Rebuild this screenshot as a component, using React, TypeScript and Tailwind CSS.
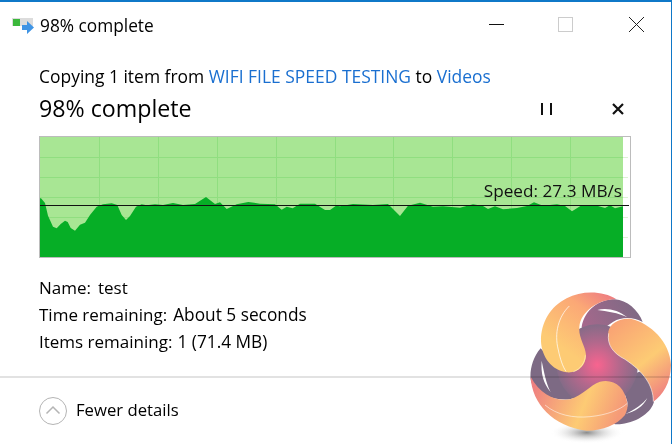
const chartTop = "M41 199.3L45 204L48 216.7L53 227.7L56.7 229.3L60.7 225L65 221.7L67.7 223L70.7 229L75 231.7L80 225.7L85 223.7L90 216L96.7 207.7L103 205.3L111.7 204.3L117.3 206L121.7 216L126 221L130 217L136 207.7L141.7 205.3L146.7 206.3L155 205.3L163 206L173 204L183 206L195 205L206 198L215 205L220 203.3L226.7 210L236.7 205.3L248.3 203L260 204.7L275 205.3L281.7 210.7L286.7 207.7L292.7 209.3L300 204.7L315 204.7L325 211L330 211L336 206.7L340 207.3L353 205L373 206L388 205L400 217L408 206.7L420 203.7L433 207.7L443 207.3L460 208.7L473 205.3L483 207L488 210L495 207.3L503 210.3L517 209L527 207L534 203.3L543 206.7L557 205.3L565 207L572 212.3L582 206L598 207L605 209L610 206.3L615 209.3L623 207.3";

const gridX = [99.5, 158.5, 217.5, 276.5, 335.5, 393.5, 452.5, 511.5, 570.5];
const gridY = [158.5, 178.5, 198.5, 218.5, 238.5];

function SpeedChart() {
  return (
    <div className="relative h-[122px] w-[592px]">
      <svg viewBox="39 137 592 122" className="block h-[122px] w-[592px]">
        <rect x="39.5" y="137.5" width="591" height="121" fill="#fff" stroke="#bcbcbc" />
        <rect x="40" y="138" width="583" height="120" fill="#a8e694" />
        {gridX.map((x) => (
          <line key={x} x1={x} x2={x} y1="138" y2="258" stroke="#90de80" />
        ))}
        {gridY.map((y) => (
          <g key={y}>
            <line x1="40" x2="623" y1={y} y2={y} stroke="#90de80" />
            <line x1="623" x2="628" y1={y} y2={y} stroke="#dcf3d4" />
          </g>
        ))}
        <path d={`${chartTop}L623 258L40 258L40 199.3Z`} fill="#06ae26" />
        <line x1="40" x2="629" y1="206.5" y2="206.5" stroke="#111" />
      </svg>
      <span className="absolute right-[9px] top-[43px] whitespace-nowrap text-[17.2px] leading-[24px] text-[#111]">Speed: 27.3 MB/s</span>
    </div>
  );
}

function Logo() {
  return (
    <svg viewBox="0 0 486 522" className="absolute left-[510px] top-[268px] h-[174px] w-[162px] mix-blend-multiply">
      <defs>
        <radialGradient id="core" cx="262" cy="285" r="135" gradientUnits="userSpaceOnUse">
          <stop offset="0" stopColor="#f8648f" />
          <stop offset="0.5" stopColor="#b3688c" />
          <stop offset="1" stopColor="#7a6c86" />
        </radialGradient>
        <linearGradient id="band" x1="230" y1="180" x2="380" y2="100" gradientUnits="userSpaceOnUse">
          <stop offset="0" stopColor="#a5688c" />
          <stop offset="1" stopColor="#7d6a84" />
        </linearGradient>
        <linearGradient id="petalA" x1="270" y1="60" x2="150" y2="230" gradientUnits="userSpaceOnUse">
          <stop offset="0" stopColor="#ef8080" />
          <stop offset="0.35" stopColor="#fba876" />
          <stop offset="1" stopColor="#fdcb74" />
        </linearGradient>
        <linearGradient id="petalB" x1="470" y1="370" x2="310" y2="170" gradientUnits="userSpaceOnUse">
          <stop offset="0" stopColor="#ef8080" />
          <stop offset="0.45" stopColor="#fdcb74" />
          <stop offset="1" stopColor="#f9a474" />
        </linearGradient>
        <linearGradient id="petalC" x1="70" y1="350" x2="320" y2="450" gradientUnits="userSpaceOnUse">
          <stop offset="0" stopColor="#ef8080" />
          <stop offset="0.6" stopColor="#fdcb74" />
          <stop offset="1" stopColor="#f59a78" />
        </linearGradient>
        <radialGradient id="drop" cx="230" cy="488" r="110" gradientTransform="translate(0 341.6) scale(1 .3)" gradientUnits="userSpaceOnUse">
          <stop offset="0" stopColor="#8b8b8b" />
          <stop offset="1" stopColor="#fff" stopOpacity="0" />
        </radialGradient>
      </defs>
      <ellipse cx="230" cy="488" rx="115" ry="32" fill="url(#drop)" />

      {/* dark bands behind the petals */}
      <path d="M215 170C225 120 265 88 315 88C350 90 385 120 398 156C370 140 335 140 310 155C285 170 270 190 225 195Z" fill="url(#band)" />
      <path d="M92 235C60 270 55 330 68 345C90 375 130 392 180 388C210 380 230 360 245 345L150 300Z" fill="#7d6a84" />
      <path d="M400 300C425 320 435 360 432 395C425 425 385 455 335 462C322 464 315 462 310 462C340 440 355 420 352 395L330 330Z" fill="#7d6a84" />
      <circle cx="262" cy="285" r="122" fill="url(#core)" />
      <path d="M262 120C290 112 325 120 352 142C325 128 290 124 262 120Z" fill="#fff" />
      <path d="M95 272C92 310 100 340 122 366C108 340 102 305 95 272Z" fill="#fff" />
      <path d="M345 432C375 425 400 410 412 384C400 400 375 420 345 432Z" fill="#fff" />

      {/* top-left petal */}
      <path
        d="M318 87C280 62 215 60 170 85C120 110 92 160 93 215C96 262 125 300 170 307C205 310 228 285 228 255C226 225 205 205 208 170C212 125 265 88 318 87Z"
        fill="url(#petalA)"
      />
      <path d="M178 108C145 140 132 190 145 240C150 265 158 290 168 304" fill="none" stroke="#fff" strokeWidth="2.500" opacity=".85" />
      <path d="M190 305C212 298 226 276 226 256" fill="none" stroke="#fff3c4" strokeWidth="2" />

      {/* right petal */}
      <path
        d="M295 185C300 160 330 142 365 147C420 160 480 215 483 285C482 340 458 375 430 395C430 345 400 305 345 268C310 250 290 225 295 185Z"
        fill="url(#petalB)"
      />
      <path d="M296 190C290 225 310 250 345 268C400 305 430 345 430 395" fill="none" stroke="#fff" strokeWidth="2" opacity=".85" />

      {/* bottom petal */}
      <path
        d="M352 400C345 350 310 325 270 335C240 345 220 375 180 388C140 395 90 375 62 320C65 400 130 470 230 482C280 482 320 465 345 435C352 420 354 410 352 400Z"
        fill="url(#petalC)"
      />
      <path d="M105 405C140 435 190 445 240 440C290 435 330 420 352 400" fill="none" stroke="#fff" strokeWidth="2" opacity=".8" />
    </svg>
  );
}

function CopyIcon() {
  return (
    <svg viewBox="0 0 23 17" className="h-[17px] w-[23px]">
      <rect x="0" y="1" width="21" height="8" fill="#dcdcdc" />
      <rect x="1" y="2" width="7" height="7" fill="#3cb83c" />
      <path d="M10 8h5V4l7 6.500-7 6.500v-4h-5z" fill="#3f94e4" />
    </svg>
  );
}

export default function App() {
  return (
    <div className="relative flex h-[444px] w-[672px] flex-col overflow-hidden border-t-2 border-r border-[#0f78c8] bg-white font-['Open_Sans','Noto_Sans',sans-serif] text-black">
      <div className="flex h-[44px] shrink-0 items-center">
        <div className="ml-3 mt-[3px] flex items-center gap-[5px]">
          <CopyIcon />
          <span className="whitespace-nowrap text-[17.3px] leading-none">98% complete</span>
        </div>
        <div className="ml-auto flex items-center">
          <svg viewBox="0 0 15 15" className="mr-[54px] h-[15px] w-[15px]">
            <path d="M0 7.500h15" stroke="#111" />
          </svg>
          <svg viewBox="0 0 15 15" className="mr-[56px] h-[15px] w-[15px]">
            <rect x=".5" y=".5" width="14" height="14" fill="none" stroke="#ccc" />
          </svg>
          <svg viewBox="0 0 15 15" className="mr-[27px] h-[15px] w-[15px]">
            <path d="M0 0l15 15M15 0L0 15" stroke="#222" strokeWidth="1" />
          </svg>
        </div>
      </div>

      <div className="flex flex-col pl-[39px] pt-[19px]">
        <p className="h-[22px] whitespace-nowrap text-[17.45px] leading-[22px]">
          Copying 1 item from <span className="text-[#1a6fd0]">WIFI FILE SPEED TESTING</span> to{" "}
          <span className="text-[#1a6fd0]">Videos</span>
        </p>
        <div className="mt-[4px] flex h-[36px] items-center">
          <span className="w-[152px] whitespace-nowrap text-[23.2px] leading-none">98% complete</span>
          <svg viewBox="0 0 12 12" className="ml-[349px] h-[12px] w-[12px]">
            <path d="M1 0h2v12H1zM10 0h2v12h-2z" fill="#111" />
          </svg>
          <svg viewBox="0 0 12 12" className="ml-[60px] h-[12px] w-[12px]">
            <path d="M1 1l10 10M11 1L1 11" stroke="#111" strokeWidth="2.200" />
          </svg>
        </div>
        <div className="mt-[9px] h-[122px]">
          <SpeedChart />
        </div>
        <div className="mt-[16px] flex flex-col whitespace-nowrap text-[17px] leading-[27px]">
          <p>
            Name:<span className="ml-[7px]">test</span>
          </p>
          <p>
            Time remaining:<span className="ml-[6px] text-[17.3px]">About 5 seconds</span>
          </p>
          <p>
            Items remaining:<span className="ml-[5px] text-[17.3px]">1 (71.4 MB)</span>
          </p>
        </div>
      </div>

      <div className="mt-[21px] h-[2px] shrink-0 bg-[#e2e2e2]" />

      <div className="flex flex-1 items-center gap-[9px] pb-[1px] pl-[39px]">
        <svg viewBox="0 0 28 28" className="h-[28px] w-[28px]">
          <circle cx="14" cy="14" r="13.500" fill="none" stroke="#b4b4b4" />
          <path d="M7.500 16.500L14 10l6.500 6.500" fill="none" stroke="#b4b4b4" strokeWidth="1.500" />
        </svg>
        <span className="whitespace-nowrap text-[16.7px] leading-none">Fewer details</span>
      </div>

      <Logo />
    </div>
  );
}
